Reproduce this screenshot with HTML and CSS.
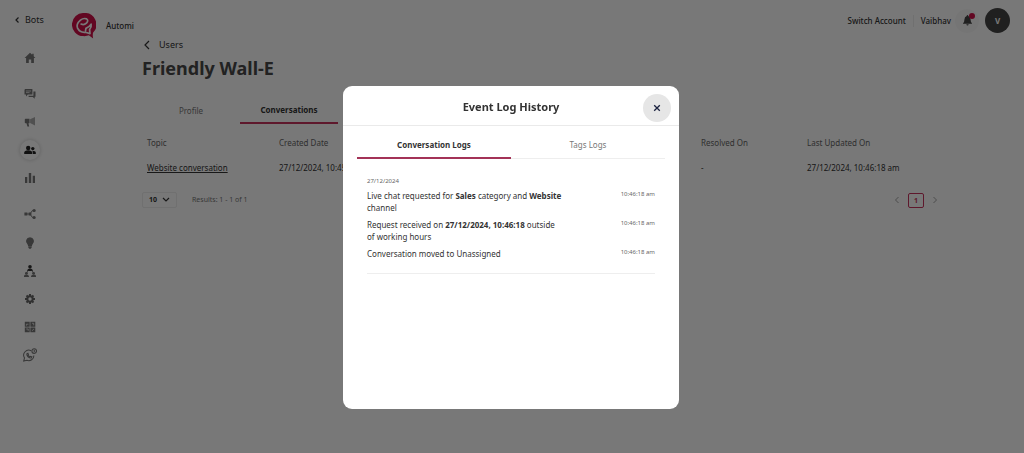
FILE: index.html
```html
<!DOCTYPE html>
<html lang="en">
<head>
  <meta charset="UTF-8">
  <meta name="viewport" content="width=device-width, initial-scale=1">
  <title>Friendly Wall-E</title>
  <link rel="stylesheet" href="styles.css">
</head>
<body>
  <div class="app">
    <!-- Sidebar -->
    <aside class="sidebar">
      <a href="#" class="bots-link">
        <svg class="chevron-small" viewBox="0 0 6 8"><path d="M4.5 1.5 2 4l2.5 2.5"/></svg>
        Bots
      </a>
      <nav class="side-nav">
        <a href="#" class="side-item home" aria-label="Home">
          <svg viewBox="0 0 12 12"><path d="M6 .8.6 6h1.5v5h2.7V7.5h2.4V11h2.7V6h1.5L9.7 4.2V1.7H8.2v1.1z"/></svg>
        </a>
        <a href="#" class="side-item" aria-label="Chats">
          <svg viewBox="0 0 12 12"><path d="M1.2 1h7.2v5.6H3.8L2 8.4V6.6H.5V1.8z"/><path d="M9.4 3.6h2.1v5.2h-.8v2L8.8 8.9H4.6V7.7h4.8z"/><path class="cut" d="M2 3h5M2 4.6h3.5"/></svg>
        </a>
        <a href="#" class="side-item" aria-label="Campaigns">
          <svg viewBox="0 0 12 12"><path d="M.8 3.6q0-.8.8-.8h3.9v4.4H4.4l.8 3.4H3.4L2.5 7.2h-.9q-.8 0-.8-.8z"/><path class="soft" d="M6.1 3.3 11 .9v8.6L6.1 7z"/></svg>
        </a>
        <a href="#" class="side-item active" aria-label="Users">
          <svg viewBox="0 0 12 12"><circle cx="4.2" cy="4" r="2.2"/><path d="M.2 10V8.5q0-2 4-2.3 4 .3 4 2.3V10z"/><circle cx="8.8" cy="4.6" r="1.7"/><path d="M8.8 10V8.4q0-1.3-1-1.7 3.9-.1 4 1.8V10z"/></svg>
        </a>
        <a href="#" class="side-item" aria-label="Analytics">
          <svg viewBox="0 0 12 12"><path d="M1 5h2.3v6H1zM4.8 1h2.4v10H4.8zM8.7 3.7H11V11H8.7z"/></svg>
        </a>
        <a href="#" class="side-item spaced" aria-label="Flows">
          <svg viewBox="0 0 12 12"><path d="M.4 4.5h3v3h-3zM4.6 4.6h2.8v2.8H4.6z"/><path class="line" d="M3 6h3l2.2-3.3h1.5M6 6l2.2 3.3h1.5"/><circle cx="10.1" cy="2.5" r="1.6"/><circle cx="10.1" cy="9.5" r="1.6"/></svg>
        </a>
        <a href="#" class="side-item" aria-label="Ideas">
          <svg viewBox="0 0 12 12"><path d="M6 .3a4 4 0 0 0-2.4 7.2l.6 1.8h3.6l.6-1.8A4 4 0 0 0 6 .3zM4.3 9.6h3.4v.9l-.9 1.2H5.2l-.9-1.2z"/></svg>
        </a>
        <a href="#" class="side-item" aria-label="Teams">
          <svg viewBox="0 0 12 12"><g class="dark"><circle cx="6" cy="1.8" r="1.8"/><path d="M3.2 6q0-2.6 2.8-2.6T8.8 6z"/></g><path class="line" d="M4 5.5 2.5 8M8 5.5 9.5 8"/><circle cx="2.4" cy="8.3" r="1.4"/><circle cx="9.6" cy="8.3" r="1.4"/><path d="M-.2 12q0-2.6 2.6-2.6T5 12zM7 12q0-2.6 2.6-2.6t2.6 2.6z"/></svg>
        </a>
        <a href="#" class="side-item" aria-label="Settings">
          <svg viewBox="0 0 12 12"><circle class="gear" cx="6" cy="6" r="2.7"/><path class="teeth" d="M6 1v2M6 9v2M1 6h2M9 6h2M2.5 2.5l1.3 1.3M8.2 8.2l1.3 1.3M2.5 9.5l1.3-1.3M8.2 3.8l1.3-1.3"/></svg>
        </a>
        <a href="#" class="side-item" aria-label="Integrations">
          <svg viewBox="0 0 12 12"><path d="M.8.8h4.9v4.9H.8zM6.4.8h4.9v4.9H6.4zM.8 6.4h4.9v4.9H.8zM6.4 6.4h4.9v4.9H6.4z"/><path class="cut" d="M2.4 4.7V3.2h2M8 2.3h1.7v2M2.2 8h2v1.8M8 9.8 10 7.9"/></svg>
        </a>
        <a href="#" class="side-item" aria-label="WhatsApp">
          <svg class="large" viewBox="0 0 12 12"><path class="line" d="M7 2.4A4.3 4.3 0 0 0 1.3 8.5L.6 11.2l2.7-.7A4.3 4.3 0 0 0 9.3 6.4M3.3 5c-.2 2 1.7 3.7 3.8 3.6l.5-1-1.3-.5-.6.5L4.3 6.2l.4-.7-.5-1z"/><circle class="line" cx="9.6" cy="2.6" r="2"/><path class="line" d="M9.6 1.6v1.2h.8"/></svg>
        </a>
      </nav>
    </aside>

    <div class="content">
      <!-- Top bar -->
      <header class="topbar">
        <svg class="logo" viewBox="0 0 24 27"><path class="logo-bubble" d="M12 0a12 12 0 0 0-1 24q4 .2 6-.8l4.5 3.3q-.8-3.5 0-6.2A12 12 0 0 0 12 0z"/><path class="logo-line" d="M9 11.5q3 1.4 5.5-.9 2.6-2.9.2-4.5-3.2-1.2-6.4 1.3-4.8 4.2-3 8.4 2.4 4.8 8.2 4.2l4.7 1.4-.4-4.2q2.2-2.8 1.6-5.6-2.2 3-5.4 4.4l-.4 2.4"/></svg>
        <span class="brand">Automi</span>
        <div class="account">
          <a href="#" class="switch-account">Switch Account</a>
          <span class="user-name">Vaibhav</span>
          <button class="bell" aria-label="Notifications">
            <svg viewBox="0 0 10 12"><path d="M5 0q.9 0 .9 1Q8.4 1.8 8.4 5q0 2.8 1.6 4v.7H0V9q1.6-1.2 1.6-4 0-3.2 2.5-4Q4.1 0 5 0zM3.7 10.3h2.6Q6.1 11.6 5 11.6t-1.3-1.3z"/></svg>
            <span class="bell-dot"></span>
          </button>
          <button class="avatar">V</button>
        </div>
      </header>

      <main class="page">
        <a href="#" class="breadcrumb">
          <svg class="chevron" viewBox="0 0 6 10"><path d="M5 1 1 5l4 4"/></svg>
          Users
        </a>
        <h1>Friendly Wall-E</h1>

        <div class="page-tabs">
          <button class="page-tab">Profile</button>
          <button class="page-tab selected">Conversations</button>
        </div>

        <table class="conversations">
          <thead>
            <tr>
              <th class="col-topic">Topic</th>
              <th class="col-created">Created Date</th>
              <th class="col-resolved">Resolved On</th>
              <th>Last Updated On</th>
            </tr>
          </thead>
          <tbody>
            <tr>
              <td><a href="#">Website conversation</a></td>
              <td>27/12/2024, 10:45:18 am</td>
              <td>-</td>
              <td>27/12/2024, 10:46:18 am</td>
            </tr>
          </tbody>
        </table>

        <div class="table-footer">
          <div class="page-size">
            <select aria-label="Rows per page">
              <option>10</option>
              <option>20</option>
            </select>
            <svg viewBox="0 0 8 6"><path d="m1 1 3 3 3-3"/></svg>
          </div>
          <span class="results">Results: 1 - 1 of 1</span>
          <div class="pager">
            <button class="pager-arrow" aria-label="Previous"><svg viewBox="0 0 6 8"><path d="M4.5 1 1.5 4l3 3"/></svg></button>
            <button class="pager-page">1</button>
            <button class="pager-arrow" aria-label="Next"><svg viewBox="0 0 6 8"><path d="m1.5 1 3 3-3 3"/></svg></button>
          </div>
        </div>
      </main>
    </div>
  </div>

  <!-- Event log modal -->
  <div class="overlay">
    <div class="modal" role="dialog" aria-modal="true" aria-labelledby="modal-title">
      <div class="modal-header">
        <h2 id="modal-title">Event Log History</h2>
        <button class="close" aria-label="Close">
          <svg viewBox="0 0 8 8"><path d="m1.2 1.2 5.6 5.6M6.8 1.2 1.2 6.8"/></svg>
        </button>
      </div>
      <div class="modal-tabs">
        <button class="modal-tab selected">Conversation Logs</button>
        <button class="modal-tab">Tags Logs</button>
      </div>
      <div class="logs">
        <div class="log-date">27/12/2024</div>
        <div class="log">
          <p>Live chat requested for <b>Sales</b> category and <b>Website</b> channel</p>
          <time>10:46:18 am</time>
        </div>
        <div class="log">
          <p>Request received on <b>27/12/2024, 10:46:18</b> outside of working hours</p>
          <time>10:46:18 am</time>
        </div>
        <div class="log">
          <p>Conversation moved to Unassigned</p>
          <time>10:46:18 am</time>
        </div>
      </div>
    </div>
  </div>
</body>
</html>
```

FILE: styles.css
```css
* {
  box-sizing: border-box;
}

body {
  margin: 0;
  font-family: "Noto Sans", "Open Sans", sans-serif;
  font-size: 8px;
  line-height: 12px;
  color: #333;
  background: #fff;
}

a {
  color: inherit;
  text-decoration: none;
}

button,
select {
  padding: 0;
  border: none;
  background: none;
  font: inherit;
  color: inherit;
  cursor: pointer;
}

svg {
  display: block;
}

.app {
  display: flex;
  min-height: 100vh;
}

/* Sidebar */
.sidebar {
  width: 60px;
  flex-shrink: 0;
}

.bots-link {
  display: flex;
  align-items: center;
  gap: 5px;
  height: 40px;
  padding-left: 14px;
  font-size: 9px;
}

.chevron-small {
  width: 6px;
  height: 8px;
}

.chevron-small path,
.chevron path,
.page-size path {
  fill: none;
  stroke: currentColor;
  stroke-width: 1.2;
}

.side-nav {
  display: flex;
  flex-direction: column;
  align-items: center;
  padding: 8px 1px 0 0;
}

.side-item {
  display: flex;
  align-items: center;
  justify-content: center;
  width: 20px;
  height: 20px;
  margin-bottom: 8px;
  border-radius: 50%;
  color: #777;
}

.side-item.home {
  margin-bottom: 16px;
}

.side-item.spaced {
  margin-top: 8px;
}

.side-item.spaced ~ .side-item {
  margin-top: 1px;
  margin-bottom: 7px;
}

.side-item.active {
  color: #222;
  background: #fff;
  box-shadow: 0 0 4px #ccc;
}

.side-item svg {
  width: 12px;
  height: 12px;
  fill: currentColor;
}

.side-item .large {
  width: 14px;
  height: 14px;
}

.side-item .dark {
  fill: #333;
}

.side-item .soft {
  fill: #aaa;
}

.side-item .cut {
  fill: none;
  stroke: #fff;
  stroke-width: 0.7;
}

.side-item .line {
  fill: none;
  stroke: currentColor;
  stroke-width: 0.9;
}

.side-item .gear,
.side-item .teeth {
  fill: none;
  stroke: #666;
  stroke-width: 2;
}

/* Top bar */
.content {
  flex: 1;
  min-width: 0;
}

.topbar {
  display: flex;
  align-items: center;
  height: 39px;
  padding: 0 14px 0 12px;
}

.logo {
  width: 24px;
  height: 26px;
  margin-top: 12px;
}

.logo-bubble {
  fill: #d01048;
}

.logo-line {
  fill: none;
  stroke: #fff;
  stroke-width: 1.8;
  stroke-linejoin: round;
  stroke-linecap: round;
}

.brand {
  margin: 12px 0 0 10px;
}

.account {
  display: flex;
  align-items: center;
  margin-left: auto;
  padding-top: 2px;
}

.switch-account {
  padding-right: 7px;
  border-right: 1px solid #eee;
}

.account,
.brand {
  font-weight: 500;
}

.user-name {
  padding-left: 7px;
}

.bell {
  position: relative;
  display: flex;
  align-items: center;
  justify-content: center;
  width: 24px;
  height: 24px;
  margin: 0 6px 0 4px;
  border-radius: 50%;
  background: #f9f9f9;
}

.bell svg {
  width: 9px;
  height: 11px;
  fill: #444;
}

.bell-dot {
  position: absolute;
  top: 4px;
  right: 4px;
  width: 6px;
  height: 6px;
  border-radius: 50%;
  background: #d01048;
}

.avatar {
  width: 25px;
  height: 25px;
  border-radius: 50%;
  background: #444;
  color: #fff;
  font-weight: 700;
}

/* Page */
.page {
  max-width: 800px;
  margin: 0 auto;
}

.breadcrumb {
  display: flex;
  align-items: center;
  gap: 9px;
  padding-left: 2px;
  font-size: 9px;
}

.chevron {
  width: 6px;
  height: 10px;
}

h1 {
  margin: 3px 0 15px;
  font-size: 18px;
  line-height: 28px;
  color: #484848;
}

.page-tabs {
  display: flex;
}

.page-tab {
  width: 98px;
  height: 27px;
  color: #777;
}

.page-tab.selected {
  border-bottom: 2px solid #c8345f;
  font-weight: 700;
  color: #333;
}

.conversations {
  width: 100%;
  margin-top: 6px;
  border-collapse: collapse;
  table-layout: fixed;
}

.conversations th,
.conversations td {
  height: 25px;
  padding: 0 5px;
  text-align: left;
  white-space: nowrap;
}

.conversations th {
  font-weight: 400;
  color: #666;
}

.conversations td a {
  text-decoration: underline;
}

.col-topic {
  width: 132px;
}

.col-created {
  width: 422px;
}

.col-resolved {
  width: 106px;
}

.table-footer {
  display: flex;
  align-items: center;
  margin-top: 12px;
}

.page-size {
  display: flex;
  align-items: center;
  position: relative;
  width: 35px;
  height: 16px;
  border: 1px solid #eee;
  border-radius: 2px;
}

.page-size select {
  width: 100%;
  padding-left: 6px;
  appearance: none;
  font-size: 7px;
  font-weight: 700;
}

.page-size svg {
  position: absolute;
  right: 6px;
  width: 8px;
  height: 6px;
  pointer-events: none;
}

.results {
  margin-left: 15px;
  font-size: 7px;
  color: #777;
}

.pager {
  display: flex;
  align-items: center;
  gap: 8px;
  margin-left: auto;
  padding-right: 4px;
}

.pager-arrow {
  color: #999;
}

.pager-arrow svg {
  width: 6px;
  height: 8px;
}

.pager-arrow path {
  fill: none;
  stroke: currentColor;
  stroke-width: 0.9;
}

.pager-page {
  width: 16px;
  height: 15px;
  border: 1px solid #c8345f;
  border-radius: 2px;
  font-size: 7px;
  line-height: 13px;
  font-weight: 700;
  color: #c8345f;
}

/* Modal */
.overlay {
  position: fixed;
  inset: 0;
  display: flex;
  align-items: flex-start;
  justify-content: center;
  padding: 86px 2px 0 0;
  background: rgba(0, 0, 0, 0.53);
}

.modal {
  width: 336px;
  max-width: 90%;
  min-height: 323px;
  border-radius: 9px;
  background: #fff;
}

.modal-header {
  position: relative;
  display: flex;
  align-items: center;
  justify-content: center;
  height: 40px;
  padding-top: 2px;
  border-bottom: 1px solid #eaeaea;
}

h2 {
  margin: 0;
  font-size: 11px;
  line-height: 18px;
}

.close {
  position: absolute;
  top: 8px;
  right: 8px;
  display: flex;
  align-items: center;
  justify-content: center;
  width: 28px;
  height: 28px;
  border-radius: 50%;
  background: #e6e6e6;
}

.close svg {
  width: 8px;
  height: 8px;
  fill: none;
  stroke: #1c2340;
  stroke-width: 1.3;
}

.modal-tabs {
  display: flex;
  margin: 6px 14px 0;
  border-bottom: 1px solid #eee;
}

.modal-tab {
  flex: 1;
  height: 27px;
  margin-bottom: -1px;
  border-bottom: 2px solid transparent;
  color: #777;
}

.modal-tab.selected {
  border-bottom-color: #a33357;
  font-weight: 700;
  color: #333;
}

.logs {
  margin: 16px 24px 0;
  padding-bottom: 13px;
  border-bottom: 1px solid #eee;
}

.log-date,
.log time {
  font-size: 6px;
  color: #666;
}

.log {
  display: flex;
  justify-content: space-between;
  margin-top: 5px;
}

.log-date + .log {
  margin-top: 3px;
}

.log p {
  width: 195px;
  margin: 0;
}

.log time {
  line-height: 8px;
}
```
